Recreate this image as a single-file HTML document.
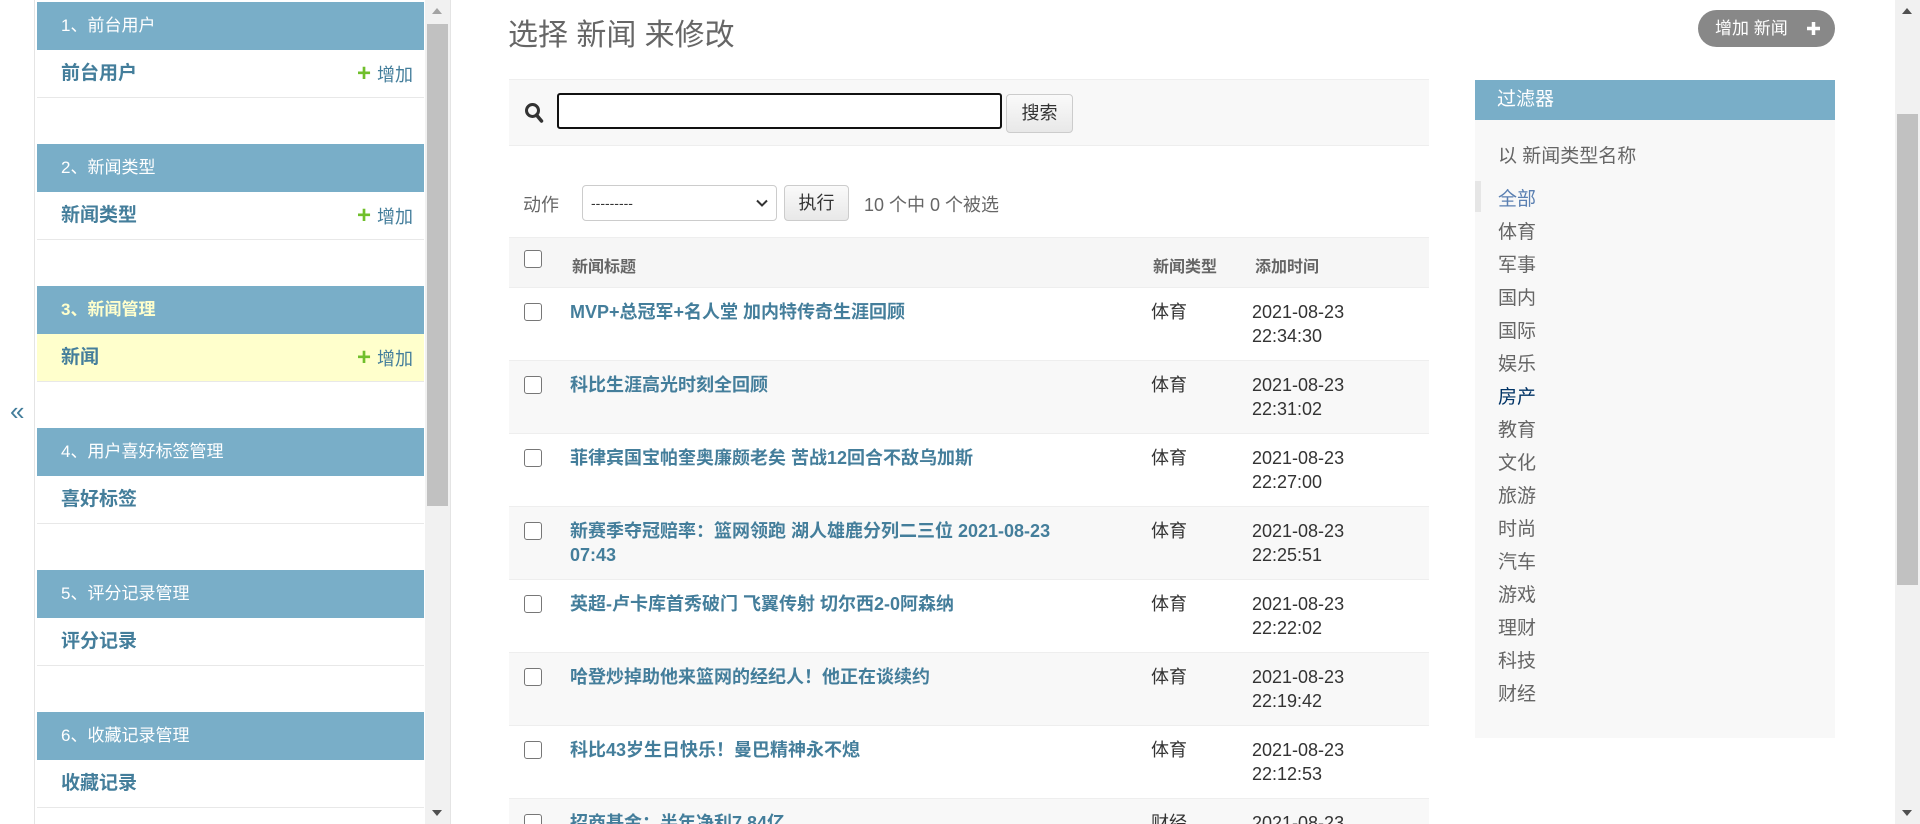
<!DOCTYPE html>
<html><head><meta charset="utf-8"><style>
*{box-sizing:border-box;margin:0;padding:0}
html{width:1920px;height:824px;overflow:hidden}
body{width:1920px;height:824px;overflow:hidden;background:#fff;font-family:"Liberation Sans","Noto Sans CJK SC",sans-serif;color:#333;position:relative}
.a{position:absolute}
.sh{left:37px;width:387px;height:48px;background:#79aec8;color:#fff;font-size:17px;line-height:48px;padding-left:24px}
.sr{left:37px;width:387px;height:48px;border-bottom:1px solid #e8e8e8;line-height:47px;padding-left:24px;font-size:19px;font-weight:bold;color:#447e9b}
.sr .add{position:absolute;right:11px;top:0;font-weight:normal;font-size:18px;color:#447e9b}
.sr .add b{color:#70bf2b;font-size:24px;margin-right:6px}
.row{left:509px;width:920px;height:73px;border-top:1px solid #eee}
.cb{position:absolute;left:15px;top:15px;width:18px;height:18px;border:1px solid #777;border-radius:3px;background:#fff}
.t{position:absolute;left:61px;top:12px;width:520px;font-size:18px;font-weight:bold;color:#447e9b;line-height:24px}
.ty{position:absolute;left:642px;top:12px;font-size:18px;line-height:24px}
.dt{position:absolute;left:743px;top:12px;font-size:18px;line-height:24px}
.f{left:1498px;font-size:19px;color:#666}
</style></head><body>
<div class="a" style="left:34px;top:0;width:1px;height:824px;background:#e4e4e4"></div>
<div class="a" style="left:10px;top:396px;font-size:26px;color:#447e9b">«</div>
<div class="a sh" style="top:2px">1、前台用户</div>
<div class="a sr" style="top:50px">前台用户<span class="add"><b>+</b>增加</span></div>
<div class="a sh" style="top:144px">2、新闻类型</div>
<div class="a sr" style="top:192px">新闻类型<span class="add"><b>+</b>增加</span></div>
<div class="a sh" style="top:286px;color:#ffc;font-weight:bold">3、新闻管理</div>
<div class="a sr" style="top:334px;background:#ffc">新闻<span class="add"><b>+</b>增加</span></div>
<div class="a sh" style="top:428px">4、用户喜好标签管理</div>
<div class="a sr" style="top:476px">喜好标签</div>
<div class="a sh" style="top:570px">5、评分记录管理</div>
<div class="a sr" style="top:618px">评分记录</div>
<div class="a sh" style="top:712px">6、收藏记录管理</div>
<div class="a sr" style="top:760px">收藏记录</div>
<div class="a" style="left:425px;top:0;width:25px;height:824px;background:#f1f1f1"></div>
<div class="a" style="left:427px;top:24px;width:21px;height:482px;background:#c1c1c1"></div>
<div class="a" style="left:432px;top:8px;border:5px solid transparent;border-bottom:6px solid #a3a3a3;border-top:0"></div>
<div class="a" style="left:432px;top:810px;border:5px solid transparent;border-top:6px solid #505050;border-bottom:0"></div>
<div class="a" style="left:450px;top:0;width:1px;height:824px;background:#e4e4e4"></div>

<div class="a" style="left:508px;top:10px;font-size:30px;color:#666">选择 新闻 来修改</div>
<div class="a" style="left:1698px;top:10px;width:137px;height:37px;border-radius:19px;background:#888;color:#fff;font-size:17px;line-height:37px;padding-left:17px">增加 新闻
<svg style="position:absolute;right:14px;top:11px" width="15" height="15" viewBox="0 0 15 15"><path d="M7.5 1v13M1 7.5h13" stroke="#fff" stroke-width="3.5"/></svg></div>

<div class="a" style="left:509px;top:79px;width:920px;height:67px;background:#f8f8f8;border-top:1px solid #eee;border-bottom:1px solid #eee"></div>
<svg class="a" style="left:524px;top:102px" width="20" height="22" viewBox="0 0 20 22"><circle cx="8.5" cy="8.5" r="6" fill="none" stroke="#333" stroke-width="3"/><path d="M12.5 13l5 6" stroke="#333" stroke-width="3.5" stroke-linecap="round"/></svg>
<div class="a" style="left:557px;top:93px;width:445px;height:36px;border:2px solid #111;border-radius:3px;background:#fff"></div>
<div class="a" style="left:1006px;top:94px;width:67px;height:39px;border:1px solid #ccc;border-radius:4px;background:linear-gradient(#fafafa,#e8e8e8);font-size:18px;line-height:37px;text-align:center">搜索</div>

<div class="a" style="left:523px;top:191px;font-size:18px;color:#666">动作</div>
<div class="a" style="left:582px;top:185px;width:195px;height:36px;border:1px solid #ccc;border-radius:4px;background:#fff;font-size:14px;line-height:34px;padding-left:8px">---------
<svg style="position:absolute;right:8px;top:13px" width="12" height="9" viewBox="0 0 12 9"><path d="M1 1.5l5 5 5-5" fill="none" stroke="#333" stroke-width="2"/></svg></div>
<div class="a" style="left:784px;top:185px;width:65px;height:36px;border:1px solid #ccc;border-radius:4px;background:linear-gradient(#fafafa,#e8e8e8);font-size:18px;line-height:34px;text-align:center">执行</div>
<div class="a" style="left:864px;top:191px;font-size:18px;color:#666">10 个中 0 个被选</div>

<div class="a row" style="top:237px;height:50px;background:#f6f6f6;border-top:1px solid #eee">
<div class="cb" style="top:12px"></div>
<div class="a" style="left:63px;top:15px;font-size:16px;font-weight:bold;color:#666">新闻标题</div>
<div class="a" style="left:644px;top:15px;font-size:16px;font-weight:bold;color:#666">新闻类型</div>
<div class="a" style="left:746px;top:15px;font-size:16px;font-weight:bold;color:#666">添加时间</div>
</div>
<div class="a row" style="top:287px"><div class="cb"></div><div class="t">MVP+总冠军+名人堂 加内特传奇生涯回顾</div><div class="ty">体育</div><div class="dt">2021-08-23<br>22:34:30</div></div>
<div class="a row" style="top:360px;background:#f8f8f8"><div class="cb"></div><div class="t">科比生涯高光时刻全回顾</div><div class="ty">体育</div><div class="dt">2021-08-23<br>22:31:02</div></div>
<div class="a row" style="top:433px"><div class="cb"></div><div class="t">菲律宾国宝帕奎奥廉颇老矣 苦战12回合不敌乌加斯</div><div class="ty">体育</div><div class="dt">2021-08-23<br>22:27:00</div></div>
<div class="a row" style="top:506px;background:#f8f8f8"><div class="cb"></div><div class="t">新赛季夺冠赔率：篮网领跑 湖人雄鹿分列二三位 2021-08-23 07:43</div><div class="ty">体育</div><div class="dt">2021-08-23<br>22:25:51</div></div>
<div class="a row" style="top:579px"><div class="cb"></div><div class="t">英超-卢卡库首秀破门 飞翼传射 切尔西2-0阿森纳</div><div class="ty">体育</div><div class="dt">2021-08-23<br>22:22:02</div></div>
<div class="a row" style="top:652px;background:#f8f8f8"><div class="cb"></div><div class="t">哈登炒掉助他来篮网的经纪人！他正在谈续约</div><div class="ty">体育</div><div class="dt">2021-08-23<br>22:19:42</div></div>
<div class="a row" style="top:725px"><div class="cb"></div><div class="t">科比43岁生日快乐！曼巴精神永不熄</div><div class="ty">体育</div><div class="dt">2021-08-23<br>22:12:53</div></div>
<div class="a row" style="top:798px;height:26px;overflow:hidden;background:#f8f8f8"><div class="cb"></div><div class="t">招商基金：半年净利7.84亿</div><div class="ty">财经</div><div class="dt">2021-08-23</div></div>

<div class="a" style="left:1475px;top:80px;width:360px;height:658px;background:#f8f8f8"></div>
<div class="a" style="left:1475px;top:80px;width:360px;height:40px;background:#79aec8;color:#fff;font-size:19px;line-height:40px;padding-left:22px">过滤器</div>
<div class="a f" style="top:141px">以 新闻类型名称</div>
<div class="a" style="left:1475px;top:181px;width:6px;height:31px;background:#e6e6e6"></div>
<div class="a f" style="top:184px;color:#5b80b2">全部</div>
<div class="a f" style="top:217px">体育</div>
<div class="a f" style="top:250px">军事</div>
<div class="a f" style="top:283px">国内</div>
<div class="a f" style="top:316px">国际</div>
<div class="a f" style="top:349px">娱乐</div>
<div class="a f" style="top:382px;color:#036">房产</div>
<div class="a f" style="top:415px">教育</div>
<div class="a f" style="top:448px">文化</div>
<div class="a f" style="top:481px">旅游</div>
<div class="a f" style="top:514px">时尚</div>
<div class="a f" style="top:547px">汽车</div>
<div class="a f" style="top:580px">游戏</div>
<div class="a f" style="top:613px">理财</div>
<div class="a f" style="top:646px">科技</div>
<div class="a f" style="top:679px">财经</div>

<div class="a" style="left:1895px;top:0;width:25px;height:824px;background:#f1f1f1"></div>
<div class="a" style="left:1897px;top:114px;width:21px;height:471px;background:#c1c1c1"></div>
<div class="a" style="left:1902px;top:8px;border:5px solid transparent;border-bottom:6px solid #505050;border-top:0"></div>
<div class="a" style="left:1902px;top:810px;border:5px solid transparent;border-top:6px solid #505050;border-bottom:0"></div>
</body></html>
